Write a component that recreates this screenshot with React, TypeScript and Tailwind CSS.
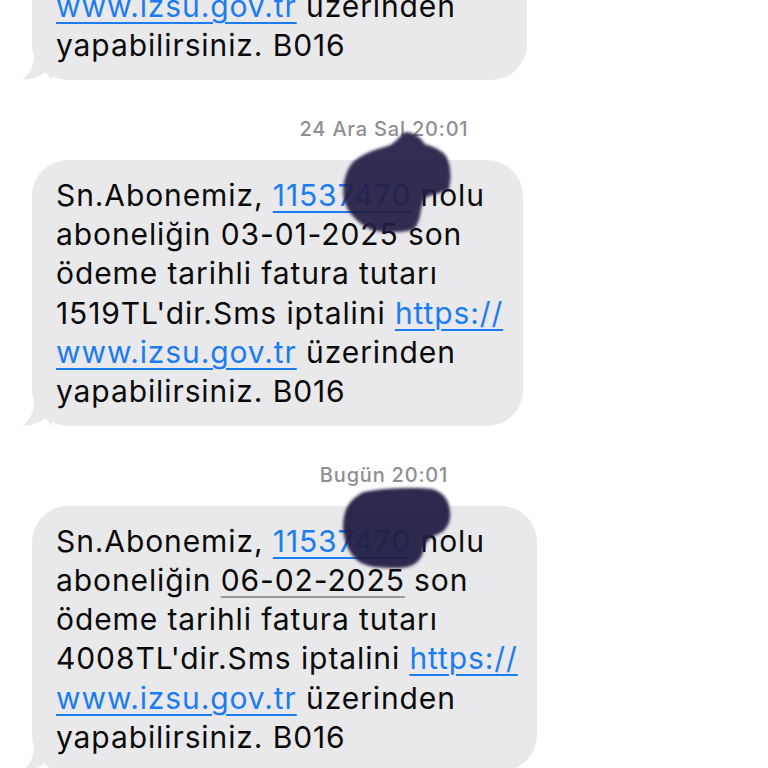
import React from 'react';

const Link = ({ children }: { children: React.ReactNode }) => (
  <span className="text-[#1b7cf3] underline decoration-[1.5px] underline-offset-[5px]">{children}</span>
);

const DateText = ({ children }: { children: React.ReactNode }) => (
  <span className="underline decoration-[#9a9a9e] decoration-[1.5px] underline-offset-[5px]">{children}</span>
);

function Tail() {
  return (
    <svg className="absolute -left-[10px] bottom-0" width="30" height="26" viewBox="0 0 30 26">
      <path d="M12 0 C12 12 8 21 0 25.5 C9 26 17 23 23 18 L30 26 L30 0 Z" fill="#e9e9eb" />
    </svg>
  );
}

function Bubble({ width, className = '', children }: { width: string; className?: string; children: React.ReactNode }) {
  return (
    <div className={`relative ml-8 ${width} ${className}`}>
      <Tail />
      <div className="relative rounded-[36px] bg-[#e9e9eb] pl-6 pr-4 pt-4 pb-[14px] text-[30px] leading-[39.3px] tracking-[0.9px] text-[#0a0a0a] whitespace-nowrap">
        {children}
      </div>
    </div>
  );
}

function Stamp({ children }: { children: React.ReactNode }) {
  return (
    <div className="mt-[38px] mb-[20px] text-center text-[20px] leading-[22px] font-medium tracking-[0.8px] text-[#8e8e93]">
      {children}
    </div>
  );
}

// marker scribbles hiding the subscriber number
function Scribbles() {
  return (
    <svg className="absolute left-0 top-0 z-10 pointer-events-none" width="768" height="768" viewBox="0 0 768 768">
      <defs>
        <filter id="soft" x="-20%" y="-20%" width="140%" height="140%">
          <feGaussianBlur stdDeviation="1.8" />
        </filter>
      </defs>
      <g filter="url(#soft)" fill="#221c44" stroke="#221c44" strokeWidth="4" strokeLinejoin="round">
        <path
          d="M406 134 C414 134 420 140 424 146 C432 148 440 151 445 158 C449 168 449 180 447 188 C440 192 428 192 422 198 C418 208 419 222 412 228 C400 231 384 231 372 228 C360 222 350 212 346 200 C344 188 346 174 354 164 C362 156 374 152 388 148 C396 146 400 138 406 134 Z"
          opacity="0.93"
        />
        <path
          d="M364 494 C384 490 414 489 432 491 C442 494 447 500 448 512 C449 522 446 528 438 532 C428 536 422 542 421 552 C418 562 410 566 398 566 C384 566 370 566 360 560 C350 552 346 540 345 528 C345 514 348 502 364 494 Z"
          opacity="0.95"
        />
      </g>
    </svg>
  );
}

export default function App() {
  return (
    <div className="relative h-[768px] w-[768px] overflow-hidden bg-white font-['Inter','Helvetica','Liberation_Sans',sans-serif]">
      <div className="flex flex-col">
        <Bubble width="w-[495px]" className="-mt-[186px]">
          Sn.Abonemiz, <Link>11537470</Link> nolu
          <br />
          aboneliğin 02-12-2024 son
          <br />
          ödeme tarihli fatura tutarı
          <br />
          1205TL'dir.Sms iptalini <Link>https://</Link>
          <br />
          <Link>www.izsu.gov.tr</Link> üzerinden
          <br />
          yapabilirsiniz. B016
        </Bubble>

        <Stamp>24 Ara Sal 20:01</Stamp>

        <Bubble width="w-[491px]">
          Sn.Abonemiz, <Link>11537470</Link> nolu
          <br />
          aboneliğin 03-01-2025 son
          <br />
          ödeme tarihli fatura tutarı
          <br />
          1519TL'dir.Sms iptalini <Link>https://</Link>
          <br />
          <Link>www.izsu.gov.tr</Link> üzerinden
          <br />
          yapabilirsiniz. B016
        </Bubble>

        <Stamp>Bugün 20:01</Stamp>

        <Bubble width="w-[505px]">
          Sn.Abonemiz, <Link>11537470</Link> nolu
          <br />
          aboneliğin <DateText>06-02-2025</DateText> son
          <br />
          ödeme tarihli fatura tutarı
          <br />
          4008TL'dir.Sms iptalini <Link>https://</Link>
          <br />
          <Link>www.izsu.gov.tr</Link> üzerinden
          <br />
          yapabilirsiniz. B016
        </Bubble>
      </div>
      <Scribbles />
    </div>
  );
}
